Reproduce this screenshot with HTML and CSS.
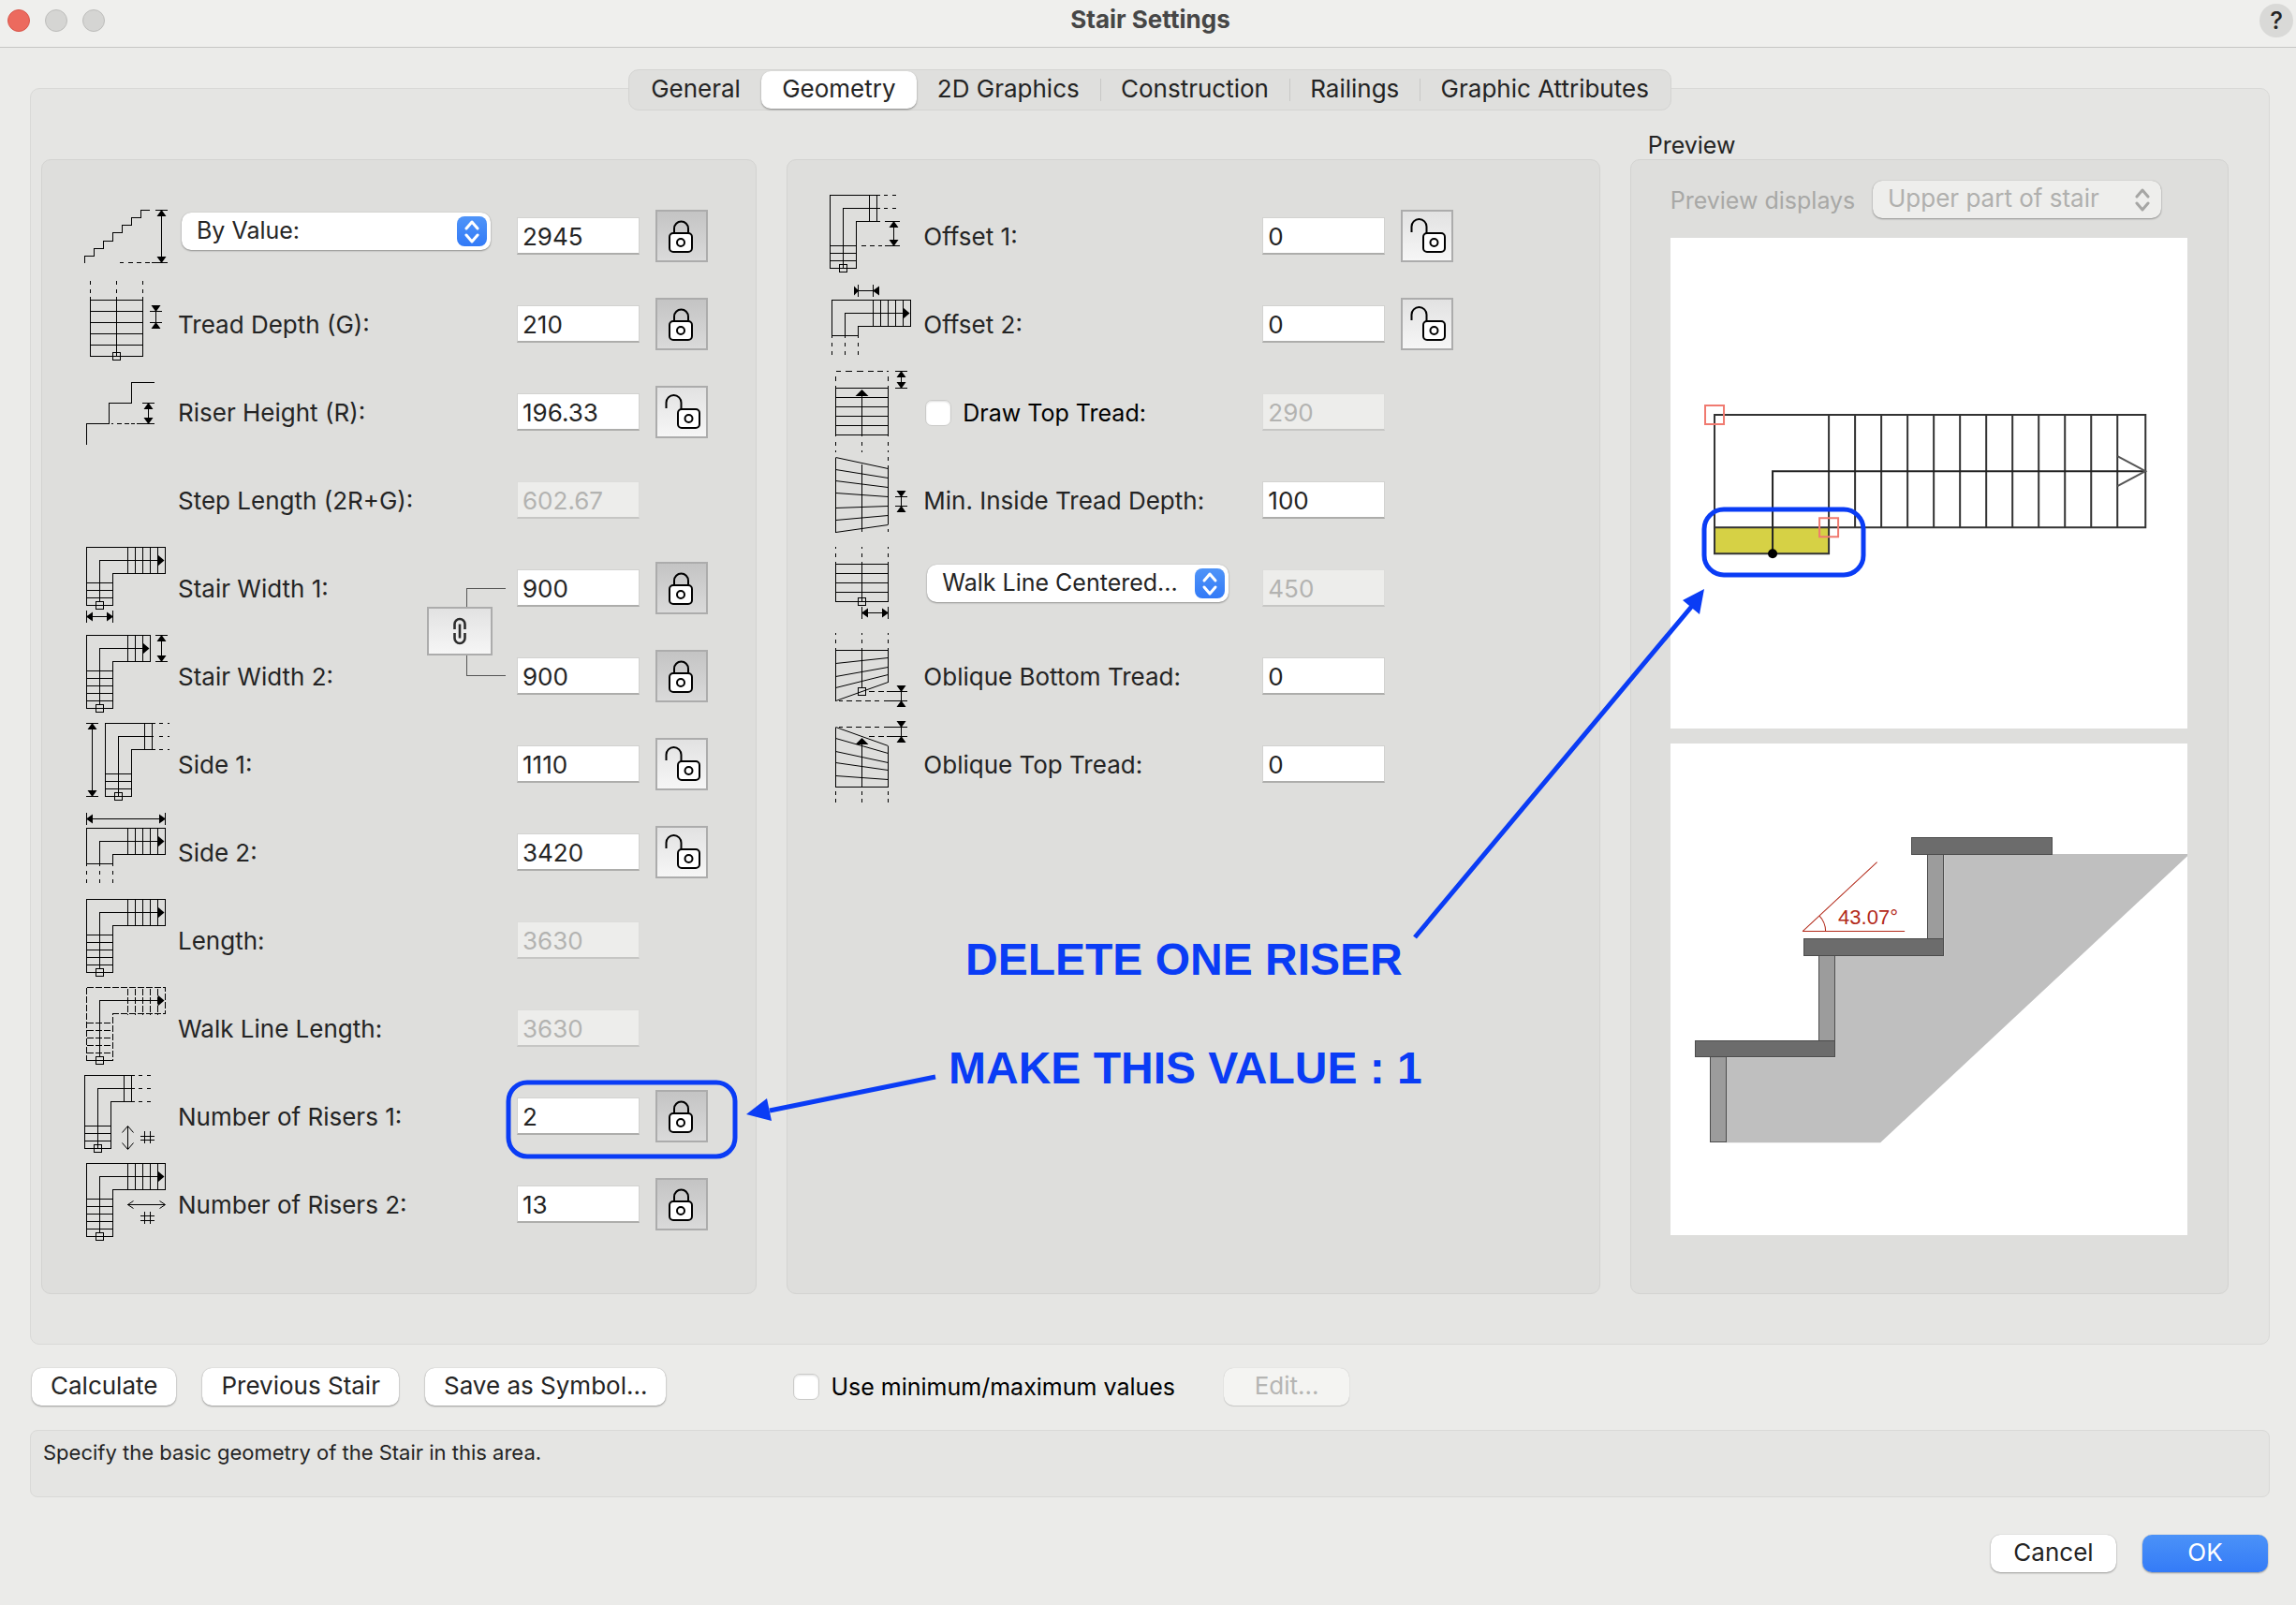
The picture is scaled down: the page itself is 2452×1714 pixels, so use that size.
FILE: index.html
```html
<!DOCTYPE html>
<html lang="en">
<head>
<meta charset="utf-8">
<title>Stair Settings</title>
<link rel="stylesheet" href="styles.css">
</head>
<body>
<svg class="defs" aria-hidden="true">
  <symbol id="lock-closed" viewBox="0 0 52 52">
    <path d="M18 22v-4a7.500 7.500 0 0 1 15 0v4" fill="none" stroke="#000" stroke-width="2"/>
    <rect x="13" y="23" width="24" height="20" rx="4" fill="#fff" stroke="#000" stroke-width="2"/>
    <circle cx="25" cy="33" r="4" fill="none" stroke="#000" stroke-width="2"/>
  </symbol>
  <symbol id="lock-open" viewBox="0 0 52 52">
    <path d="M9.500 22v-6a8 8 0 0 1 16 0v7" fill="none" stroke="#000" stroke-width="2"/>
    <rect x="22" y="23" width="23" height="20" rx="4" fill="#fff" stroke="#000" stroke-width="2"/>
    <circle cx="33.500" cy="33" r="4" fill="none" stroke="#000" stroke-width="2"/>
  </symbol>
  <symbol id="chevrons" viewBox="0 0 32 32">
    <path d="M10 13l6-7 6 7M10 20l6 7 6-7" fill="none" stroke="currentColor" stroke-width="3" stroke-linecap="round" stroke-linejoin="round"/>
  </symbol>
  <symbol id="l-full" viewBox="0 0 96 94">
    <path class="ln" d="M4.500 3.500H88.500V31.500H32.500V81.500H4.500ZM18.500 77V17.500H82M48.500 3.500v28M56.500 3.500v28M64.500 3.500v28M72.500 3.500v28M80.500 3.500v28M4.500 41.500h28M4.500 49.500h28M4.500 57.500h28M4.500 65.500h28M4.500 73.500h28M14.500 77.500h8v8h-8z"/>
    <path class="hd" d="M87.500 17.500l-7-6v12z"/>
  </symbol>
  <symbol id="l-cut-right" viewBox="0 0 96 94">
    <path class="ln" d="M56 3.500H2.500V81.500H30.500V31.500H56M44.500 3.500v28M52.500 3.500v28M56 17.500H16.500V81M2.500 57.500h28M2.500 65.500h28M2.500 73.500h28M12.500 77.500h8v8h-8zM60 3.500h4M69 3.500h4M60 17.500h4M69 17.500h4"/>
  </symbol>
  <symbol id="l-cut-bottom" viewBox="0 0 96 94">
    <path class="ln" d="M4.500 62V21.500H88.500V49.500H32.500V62M18.500 62V35.500H82M48.500 21.500v28M56.500 21.500v28M64.500 21.500v28M72.500 21.500v28M80.500 21.500v28M4.500 59.500h28M4.500 67v4M18.500 67v4M32.500 67v4M4.500 76v4M18.500 76v4M32.500 76v4"/>
    <path class="hd" d="M87.500 35.500l-7-6v12z"/>
  </symbol>
</svg>

<header class="titlebar">
  <div class="lights"><span class="light close"></span><span class="light"></span><span class="light"></span></div>
  <h1>Stair Settings</h1>
  <button class="help" type="button" aria-label="Help">?</button>
</header>

<main>
  <nav class="tabs">
    <button type="button">General</button>
    <button type="button" class="active">Geometry</button>
    <button type="button">2D Graphics</button>
    <button type="button" class="sep">Construction</button>
    <button type="button" class="sep">Railings</button>
    <button type="button" class="sep">Graphic Attributes</button>
  </nav>

  <div class="sheet">
    <h2>Preview</h2>

    <section class="panel form">
      <div class="row">
        <svg class="icon" viewBox="0 0 96 94"><path class="ln" d="M2.500 76V68.500H12.500V60.500H22.500V52.500H32.500V43.500H42.500V35.500H52.500V27.500H62.500V19.500H72M78 19.500h13M84.500 19.500v56M91 75.500H74M40 75.500h4M49 75.500h5M58 75.500h5M67 75.500h5"/><path class="hd" d="M84.500 19l5 7h-10zM84.500 76l5-7h-10z"/></svg>
        <span class="popup"><select aria-label="Stair height mode"><option>By Value:</option></select><svg class="stepper"><use href="#chevrons"/></svg></span>
        <input type="text" value="2945" aria-label="Stair height">
        <button type="button" class="lock on" aria-label="Unlock stair height"><svg><use href="#lock-closed"/></svg></button>
      </div>
      <div class="row">
        <svg class="icon" viewBox="0 0 96 94"><path class="ln" d="M8.500 1v4M36.500 1v4M64.500 1v4M8.500 10v4M36.500 10v4M64.500 10v4M8.500 18V81.500H64.500V18M36.500 18v64M8.500 21.500h56M8.500 33.500h56M8.500 45.500h56M8.500 57.500h56M8.500 69.500h56M32.500 77.500h8v8h-8zM72 33.500h13M72 45.500h13M78.500 28v24"/><path class="hd" d="M78.500 34l5-7h-10zM78.500 45l5 7h-10z"/></svg>
        <label for="tread">Tread Depth (G):</label>
        <input type="text" id="tread" value="210">
        <button type="button" class="lock on" aria-label="Unlock tread depth"><svg><use href="#lock-closed"/></svg></button>
      </div>
      <div class="row">
        <svg class="icon" viewBox="0 0 96 94"><path class="ln" d="M4.500 82V59.500H28.500V37.500H52.500V15.500H77M64 37.500h13M70.500 37.500v22M58 59.500h19M31 59.500h2M37 59.500h5M45 59.500h5M52 59.500h4"/><path class="hd" d="M70.500 37l5 7h-10zM70.500 60l5-7h-10z"/></svg>
        <label for="riser">Riser Height (R):</label>
        <input type="text" id="riser" value="196.33">
        <button type="button" class="lock" aria-label="Lock riser height"><svg><use href="#lock-open"/></svg></button>
      </div>
      <div class="row">
        <label for="step">Step Length (2R+G):</label>
        <input type="text" id="step" value="602.67" disabled>
      </div>
      <div class="pair">
        <div class="rows">
          <div class="row">
            <svg class="icon" viewBox="0 0 96 94"><path class="ln" d="M4.500 3.500H88.500V31.500H32.500V65.500H4.500ZM18.500 61V17.500H82M48.500 3.500v28M56.500 3.500v28M64.500 3.500v28M72.500 3.500v28M80.500 3.500v28M4.500 41.500h28M4.500 49.500h28M4.500 57.500h28M14.500 61.500h8v8h-8zM4.500 71v13M32.500 71v13M4.500 77.500h28"/><path class="hd" d="M87.500 17.500l-7-6v12zM4 77.500l7-5v10zM33 77.500l-7-5v10z"/></svg>
            <label for="w1">Stair Width 1:</label>
            <input type="text" id="w1" value="900">
            <button type="button" class="lock on" aria-label="Unlock stair width 1"><svg><use href="#lock-closed"/></svg></button>
          </div>
          <div class="row">
            <svg class="icon" viewBox="0 0 96 94"><path class="ln" d="M4.500 3.500H72.500V31.500H32.500V81.500H4.500ZM18.500 77V17.500H66M48.500 3.500v28M56.500 3.500v28M64.500 3.500v28M4.500 41.500h28M4.500 49.500h28M4.500 57.500h28M4.500 65.500h28M4.500 73.500h28M14.500 77.500h8v8h-8zM78 3.500h13M78 31.500h13M84.500 3.500v28"/><path class="hd" d="M71.500 17.500l-7-6v12zM84.500 3l5 7h-10zM84.500 32l5-7h-10z"/></svg>
            <label for="w2">Stair Width 2:</label>
            <input type="text" id="w2" value="900">
            <button type="button" class="lock on" aria-label="Unlock stair width 2"><svg><use href="#lock-closed"/></svg></button>
          </div>
        </div>
        <div class="link">
          <span class="arm top"></span>
          <button type="button" aria-label="Link stair widths"><svg viewBox="0 0 16 30"><path d="M2.500 13V7.500a5.500 5.500 0 0 1 11 0V13M2.500 17v5.500a5.500 5.500 0 0 0 11 0V17M8 7.500v15" fill="none" stroke="#2c2c2c" stroke-width="2.600"/></svg></button>
          <span class="arm bottom"></span>
        </div>
      </div>
      <div class="row">
        <svg class="icon" viewBox="0 0 96 94"><path class="ln" d="M78 3.500H24.500V81.500H52.500V31.500H78M66.500 3.500v28M74.500 3.500v28M76 17.500H38.500V81M24.500 57.500h28M24.500 65.500h28M24.500 73.500h28M34.500 77.500h8v8h-8zM82 3.500h4M91 3.500h2M82 17.500h4M91 17.500h2M82 31.500h4M91 31.500h2M4 3.500h13M4 81.500h13M10.500 3.500v78"/><path class="hd" d="M10.500 3l5 7h-10zM10.500 82l5-7h-10z"/></svg>
        <label for="s1">Side 1:</label>
        <input type="text" id="s1" value="1110">
        <button type="button" class="lock" aria-label="Lock side 1"><svg><use href="#lock-open"/></svg></button>
      </div>
      <div class="row">
        <svg class="icon" viewBox="0 0 96 94"><use href="#l-cut-bottom"/><path class="ln" d="M4.500 5v13M88.500 5v13M4.500 11.500h84"/><path class="hd" d="M4 11.500l7-5v10zM89 11.500l-7-5v10z"/></svg>
        <label for="s2">Side 2:</label>
        <input type="text" id="s2" value="3420">
        <button type="button" class="lock" aria-label="Lock side 2"><svg><use href="#lock-open"/></svg></button>
      </div>
      <div class="row">
        <svg class="icon" viewBox="0 0 96 94"><use href="#l-full"/></svg>
        <label for="len">Length:</label>
        <input type="text" id="len" value="3630" disabled>
      </div>
      <div class="row">
        <svg class="icon" viewBox="0 0 96 94"><path class="ln dash" d="M4.500 3.500H88.500V31.500H32.500V81.500M4.500 3.500V81.500M48.500 5v28M56.500 5v28M64.500 5v28M72.500 5v28M80.500 5v28M4.500 41.500h28M4.500 49.500h28M4.500 57.500h28M4.500 65.500h28M4.500 73.500h28"/><path class="ln" d="M18.500 77V17.500H82M4.500 81.500h28M14.500 77.500h8v8h-8z"/><path class="hd" d="M87.500 17.500l-7-6v12z"/></svg>
        <label for="wlen">Walk Line Length:</label>
        <input type="text" id="wlen" value="3630" disabled>
      </div>
      <div class="row">
        <svg class="icon" viewBox="0 0 96 94"><use href="#l-cut-right"/><path class="ln" d="M60 31.500h4M69 31.500h4M48.500 58v24M62 68.500h15M62 72.500h15M66.500 63v13M72.500 63v13"/><path class="ln soft" d="M42.500 64.500l6-7 6 7M42.500 75.500l6 7 6-7"/></svg>
        <label for="n1">Number of Risers 1:</label>
        <input type="text" id="n1" value="2">
        <button type="button" class="lock on" aria-label="Unlock number of risers 1"><svg><use href="#lock-closed"/></svg></button>
      </div>
      <div class="row">
        <svg class="icon" viewBox="0 0 96 94"><use href="#l-full"/><path class="ln" d="M48 47.500h40M62 59.500h15M62 64.500h15M66.500 55v13M72.500 55v13"/><path class="ln soft" d="M54.500 43.500l-6 4 6 4M82.500 43.500l6 4-6 4"/></svg>
        <label for="n2">Number of Risers 2:</label>
        <input type="text" id="n2" value="13">
        <button type="button" class="lock on" aria-label="Unlock number of risers 2"><svg><use href="#lock-closed"/></svg></button>
      </div>
    </section>

    <section class="panel form">
      <div class="row">
        <svg class="icon" viewBox="0 0 96 94"><use href="#l-cut-right"/><path class="ln" d="M61 31.500h16M61 57.500h16M70.500 31.500v26M36 57.500h5M45 57.500h5M54 57.500h4"/><path class="hd" d="M70.500 31l5 7h-10zM70.500 58l5-7h-10z"/></svg>
        <label for="o1">Offset 1:</label>
        <input type="text" id="o1" value="0">
        <button type="button" class="lock" aria-label="Lock offset 1"><svg><use href="#lock-open"/></svg></button>
      </div>
      <div class="row">
        <svg class="icon" viewBox="0 0 96 94"><use href="#l-cut-bottom"/><path class="ln" d="M32.500 5v13M48.500 5v13M28 11.500h26"/><path class="hd" d="M33 11.500l-5-5v10zM48 11.500l7-5v10z"/></svg>
        <label for="o2">Offset 2:</label>
        <input type="text" id="o2" value="0">
        <button type="button" class="lock" aria-label="Lock offset 2"><svg><use href="#lock-open"/></svg></button>
      </div>
      <div class="row">
        <svg class="icon" viewBox="0 0 96 94"><path class="ln" d="M9 3.500h5M19 3.500h7M31 3.500h7M43 3.500h6M53 3.500h6M63 3.500h2M8.500 9v5M64.500 9v5M8.500 19V73M64.500 19V73M8.500 21.500h56M8.500 31.500h56M8.500 41.500h56M8.500 51.500h56M8.500 61.500h56M8.500 71.500h56M36.500 26V73M8.500 79v4M36.500 79v4M64.500 79v4M8.500 88v2M36.500 88v2M64.500 88v2M72 3.500h13M72 21.500h13M78.500 3.500v18"/><path class="hd" d="M36.500 23l7 7h-14zM78.500 3l5 7h-10zM78.500 22l5-7h-10z"/></svg>
        <label class="check"><input type="checkbox">Draw Top Tread:</label>
        <input type="text" value="290" aria-label="Top tread depth" disabled>
      </div>
      <div class="row">
        <svg class="icon" viewBox="0 0 96 94"><path class="ln" d="M8.500 1.500V81.500M36.500 9V81M64.500 1v4M64.500 10V73M64.500 78v3M72 43.500h13M72 53.500h13M78.500 38v20"/><path class="ln soft" d="M8.500 1.500l56 12M8.500 14.500l56 9M8.500 26.500l56 7M8.500 39.500l56 4M8.500 55.500l56-2M8.500 68.500l56-5M8.500 81.500l56-8"/><path class="hd" d="M78.500 44l5-7h-10zM78.500 53l5 7h-10z"/></svg>
        <label for="mi">Min. Inside Tread Depth:</label>
        <input type="text" id="mi" value="100">
      </div>
      <div class="row">
        <svg class="icon" viewBox="0 0 96 94"><path class="ln" d="M8.500 3v2M36.500 3v2M64.500 3v2M8.500 10v4M36.500 10v4M64.500 10v4M8.500 19V61.500H64.500V19M36.500 19v43M8.500 21.500h56M8.500 31.500h56M8.500 41.500h56M8.500 51.500h56M32.500 57.500h8v8h-8zM36.500 67v13M64.500 67v13M36.500 73.500h28"/><path class="hd" d="M36 73.500l7-5v10zM65 73.500l-7-5v10z"/></svg>
        <span class="popup"><select aria-label="Walk line position"><option>Walk Line Centered...</option></select><svg class="stepper"><use href="#chevrons"/></svg></span>
        <input type="text" value="450" aria-label="Walk line offset" disabled>
      </div>
      <div class="row">
        <svg class="icon" viewBox="0 0 96 94"><path class="ln" d="M8.500 1v2M36.500 1v2M64.500 1v2M8.500 8v4M36.500 8v4M64.500 8v4M8.500 17V73.500M36.500 17V60M64.500 17V53.500M8.500 19.500h56M32.500 59.500h8v8h-8zM44 63.500h6M54 63.500h6M63 63.500h22M12 73.500h4M20 73.500h6M30 73.500h6M40 73.500h6M50 73.500h5M60 73.500h25M78.500 58v20"/><path class="ln soft" d="M8.500 33.500l56-6M8.500 47.500l56-10M8.500 59.500l56-14M8.500 73.500l56-20"/><path class="hd" d="M78.500 64l5-7h-10zM78.500 73l5 7h-10z"/></svg>
        <label for="ob">Oblique Bottom Tread:</label>
        <input type="text" id="ob" value="0">
      </div>
      <div class="row">
        <svg class="icon" viewBox="0 0 96 94"><path class="ln" d="M8.500 7.500V71.500H64.500V27.500M36.500 22V72M8.500 76v4M36.500 76v4M64.500 76v4M8.500 84v4M36.500 84v4M64.500 84v4M12 7.500h4M20 7.500h6M30 7.500h6M40 7.500h6M50 7.500h5M60 7.500h25M44 17.500h6M54 17.500h6M63 17.500h22M78.500 2v20"/><path class="ln soft" d="M8.500 7.500l56 20M8.500 19.500l56 16M8.500 33.500l56 12M8.500 45.500l56 8M8.500 59.500l56 4"/><path class="hd" d="M36.500 19l7 7h-14zM78.500 8l5-7h-10zM78.500 17l5 7h-10z"/></svg>
        <label for="ot">Oblique Top Tread:</label>
        <input type="text" id="ot" value="0">
      </div>
    </section>

    <section class="panel preview">
      <div class="displays">
        <label for="part">Preview displays</label>
        <span class="popup off"><select id="part" disabled><option>Upper part of stair</option></select><svg class="stepper"><use href="#chevrons"/></svg></span>
      </div>
      <svg class="view" viewBox="0 0 552 524" role="img" aria-label="Stair plan">
        <path fill="#d6d145" d="M47 309h122v28H47z"/>
        <path fill="none" stroke="#333" stroke-width="2" d="M47 189H507V309H47ZM47 309v28h122v-28M169 189v120M197 189v120M225 189v120M253 189v120M281 189v120M309 189v120M337 189v120M365 189v120M393 189v120M421 189v120M449 189v120M477 189v120"/>
        <path fill="none" stroke="#222" stroke-width="2" d="M109 337V249H507"/>
        <path fill="none" stroke="#555" stroke-width="2" d="M477 233l30 16-30 16"/>
        <circle cx="109" cy="337" r="5"/>
        <path fill="none" stroke="#f07a70" stroke-width="2" d="M37 179h20v20H37zM159 299h20v20h-20z"/>
      </svg>
      <svg class="view" viewBox="0 0 552 524" role="img" aria-label="Stair section">
        <path fill="#bfbfbf" d="M59 335H176V227H292V118H552V120L224 426H59Z"/>
        <g stroke="#4c4c4c" shape-rendering="crispEdges">
          <path fill="#9c9c9c" d="M42.500 334.500h17v91h-17zM158.500 226.500h17v91h-17zM274.500 118.500h17v90h-17z"/>
          <path fill="#6c6c6c" d="M26.500 317.500h149v17h-149zM142.500 208.500h149v18h-149zM257.500 100.500h150v18h-150z"/>
        </g>
        <path fill="none" stroke="#b32a1a" d="M141 200.500H250M141 200.500L220.500 126.500M159 184a24 24 0 0 1 6.500 16"/>
        <text class="angle" x="179" y="193">43.07°</text>
      </svg>
    </section>
  </div>

  <div class="actions">
    <button type="button" class="push">Calculate</button>
    <button type="button" class="push">Previous Stair</button>
    <button type="button" class="push">Save as Symbol...</button>
    <label class="check limits"><input type="checkbox">Use minimum/maximum values</label>
    <button type="button" class="push fixed" disabled>Edit...</button>
  </div>

  <p class="hint">Specify the basic geometry of the Stair in this area.</p>
</main>

<footer>
  <button type="button" class="push fixed">Cancel</button>
  <button type="button" class="push fixed primary">OK</button>
</footer>

<svg class="notes" viewBox="0 0 2452 1714">
  <rect x="543" y="1156" width="242" height="79" rx="20"/>
  <rect x="1820" y="544" width="170" height="70" rx="21"/>
  <path d="M999 1150L822 1186M1511 1001L1808 646"/>
  <path class="tip" d="M797 1190L819 1173L824 1197ZM1820 629L1797 641L1815 656Z"/>
  <text x="1031" y="1041">DELETE ONE RISER</text>
  <text x="1013" y="1157">MAKE THIS VALUE : 1</text>
</svg>
</body>
</html>
```
FILE: styles.css
```css
* { box-sizing: border-box; }

body {
  position: relative;
  margin: 0;
  padding-bottom: 34px;
  background: #ebebe9;
  color: #242424;
  font-family: Inter, "Liberation Sans", sans-serif;
  font-size: 26px;
  line-height: 32px;
}

button, input, select { font: inherit; color: inherit; margin: 0; }
h1, h2, p { margin: 0; font-size: inherit; font-weight: 400; }
.defs { display: none; }

/* Title bar */
.titlebar {
  display: grid;
  grid-template-columns: 1fr auto 1fr;
  align-items: center;
  height: 51px;
  padding: 0 3px 7px 8px;
  background: #efefed;
  border-bottom: 1px solid #c6c6c4;
}
.titlebar h1 { padding-bottom: 2px; color: #464646; font-weight: 700; }
.lights { display: flex; gap: 16px; }
.light {
  width: 24px;
  height: 24px;
  border: 1px solid #bdbdbb;
  border-radius: 50%;
  background: #d5d5d3;
}
.light.close { background: #ec6a5e; border-color: #d8574b; }
.help {
  justify-self: end;
  width: 36px;
  height: 36px;
  padding: 0;
  border: 0;
  border-radius: 50%;
  background: #d9d9d7;
  font-weight: 500;
}

main { padding: 23px 28px 0 32px; }

/* Tabs */
.tabs {
  position: relative;
  display: flex;
  width: 1114px;
  height: 44px;
  margin: 0 auto -24px;
  padding: 1px;
  background: #dfdfdd;
  border: 1px solid #d4d4d2;
  border-radius: 11px;
}
.tabs button {
  flex: 1 1 auto;
  padding: 0 0 2px;
  border: 0;
  background: none;
}
.tabs .active {
  background: #fff;
  border-radius: 10px;
  box-shadow: 0 1px 2px #0006;
}
.tabs .sep {
  background: linear-gradient(#c8c8c6, #c8c8c6) left center / 1px 24px no-repeat;
}

/* Sheet and panels */
.sheet {
  display: grid;
  grid-template-columns: 764fr 868fr 639fr;
  grid-template-rows: 40px auto;
  column-gap: 32px;
  padding: 35px 43px 53px 11px;
  background: #e5e5e3;
  border: 1px solid #d9d9d7;
  border-radius: 10px;
}
.sheet h2 { grid-column: 3; padding: 9px 19px 0; font-size: 25px; }
.panel {
  grid-row: 2;
  background: #dededc;
  border: 1px solid #d3d3d1;
  border-radius: 10px;
}
.form { padding: 34px 43px 48px; }

.row {
  display: grid;
  grid-template-columns: 102px 362px 148px 56px;
  align-items: center;
  height: 94px;
}
.icon { width: 96px; height: 94px; grid-column: 1; }
.ln { fill: none; stroke: #000; stroke-width: 1; shape-rendering: crispEdges; }
.soft { shape-rendering: auto; }
.dash { stroke-dasharray: 7 2; }
.hd { fill: #000; }
.row > label, .row > .popup { grid-column: 2; }
.row > label { padding-top: 2px; }
.row > input { grid-column: 3; }
.row > .lock { grid-column: 4; }

input[type="text"] {
  width: 131px;
  height: 40px;
  padding: 2px 5px 0;
  background: #fff;
  border: 1px solid #d2d2d0;
  border-bottom: 2px solid #adadab;
  border-radius: 0;
}
input[type="text"]:disabled {
  background: #ededeb;
  border-color: #dcdcda;
  border-bottom-color: #c6c6c4;
  color: #b3b3b1;
}

.lock, .link button {
  width: 56px;
  height: 56px;
  padding: 0;
  background: linear-gradient(#e2e2e2, #f6f6f6);
  border: 2px solid #acacac;
}
.lock.on { background: linear-gradient(#c4c4c4, #dadada); }
.lock svg { display: block; width: 52px; height: 52px; }

/* Pop-up menus */
.popup { display: grid; width: 330px; margin: 0 0 10px 4px; font-size: 25px; }
.popup > * { grid-area: 1 / 1; }
.popup select {
  appearance: none;
  height: 40px;
  padding: 0 48px 2px 16px;
  background: #fff;
  border: 0;
  border-radius: 10px;
  box-shadow: 0 0 1px #0004, 0 1px 2px #0005;
}
.stepper {
  place-self: center end;
  width: 32px;
  height: 32px;
  margin-right: 4px;
  border-radius: 8px;
  background: linear-gradient(#4f94f8, #327af7);
  color: #fff;
  pointer-events: none;
}
.form + .form .popup { width: 322px; }
.popup.off { width: 308px; margin: 0; font-size: 26px; }
.popup.off select { background: #eeeeec; color: #b0b0ae; opacity: 1; }
.popup.off .stepper { background: none; color: #a6a6a4; }

/* Tick boxes */
.check {
  display: flex;
  align-items: center;
  gap: 12px;
  padding-left: 2px;
  color: #000;
  font-size: 25px;
}
.check input {
  appearance: none;
  width: 28px;
  height: 28px;
  background: #fff;
  border: 1px solid #cbcbc9;
  border-radius: 7px;
  box-shadow: inset 0 1px 2px #0002;
}

/* Linked width rows */
.pair { display: grid; }
.pair > * { grid-area: 1 / 1; }
.link {
  place-self: center start;
  display: grid;
  grid-template-rows: 20px 52px 22px;
  width: 84px;
  margin-left: 368px;
}
.link button { width: 70px; height: 52px; }
.link svg { display: block; width: 16px; height: 30px; margin: auto; }
.arm { margin-left: 42px; border-left: 1px solid #555; }
.arm.top { border-top: 1px solid #555; }
.arm.bottom { border-bottom: 1px solid #555; }

/* Preview */
.preview { padding: 22px 43px 60px 42px; }
.displays {
  display: flex;
  align-items: center;
  justify-content: space-between;
  padding-right: 28px;
  margin-bottom: 21px;
  color: #a8a8a6;
}
.displays label { padding-top: 2px; font-size: 25px; }
.view { display: block; width: 100%; background: #fff; }
.view + .view { margin-top: 16px; }
.angle { fill: #b32a1a; font: 22px "Liberation Sans", Arial, sans-serif; }

/* Buttons under the sheet */
.actions {
  display: flex;
  align-items: center;
  gap: 28px;
  margin-top: 25px;
  padding-left: 2px;
}
.push {
  height: 40px;
  padding: 0 20px 2px;
  background: #fff;
  border: 0;
  border-radius: 10px;
  box-shadow: 0 0 1px #0004, 0 1px 2px #0005;
}
.push:disabled { background: #f4f4f2; color: #b5b5b3; box-shadow: 0 0 1px #0003, 0 1px 1px #0002; }
.push.fixed { width: 134px; }
.push.primary { background: linear-gradient(#4b92f8, #347bf7); color: #fff; }
.limits { margin: 0 24px 0 106px; }

.hint {
  height: 72px;
  margin-top: 26px;
  padding: 11px 13px;
  background: #e5e5e3;
  border: 1px solid #d9d9d7;
  border-radius: 8px;
  font-size: 22px;
  line-height: 24px;
}

footer {
  display: flex;
  justify-content: flex-end;
  gap: 28px;
  padding: 40px 30px 0;
}

/* Mark-up drawn over the dialog */
.notes {
  position: absolute;
  top: 0;
  left: 0;
  width: 100%;
  fill: none;
  stroke: #0a3cf5;
  stroke-width: 5;
  pointer-events: none;
}
.notes .tip, .notes text { fill: #0a3cf5; stroke: none; }
.notes text { font: bold 48px "Liberation Sans", Arial, sans-serif; }
```
